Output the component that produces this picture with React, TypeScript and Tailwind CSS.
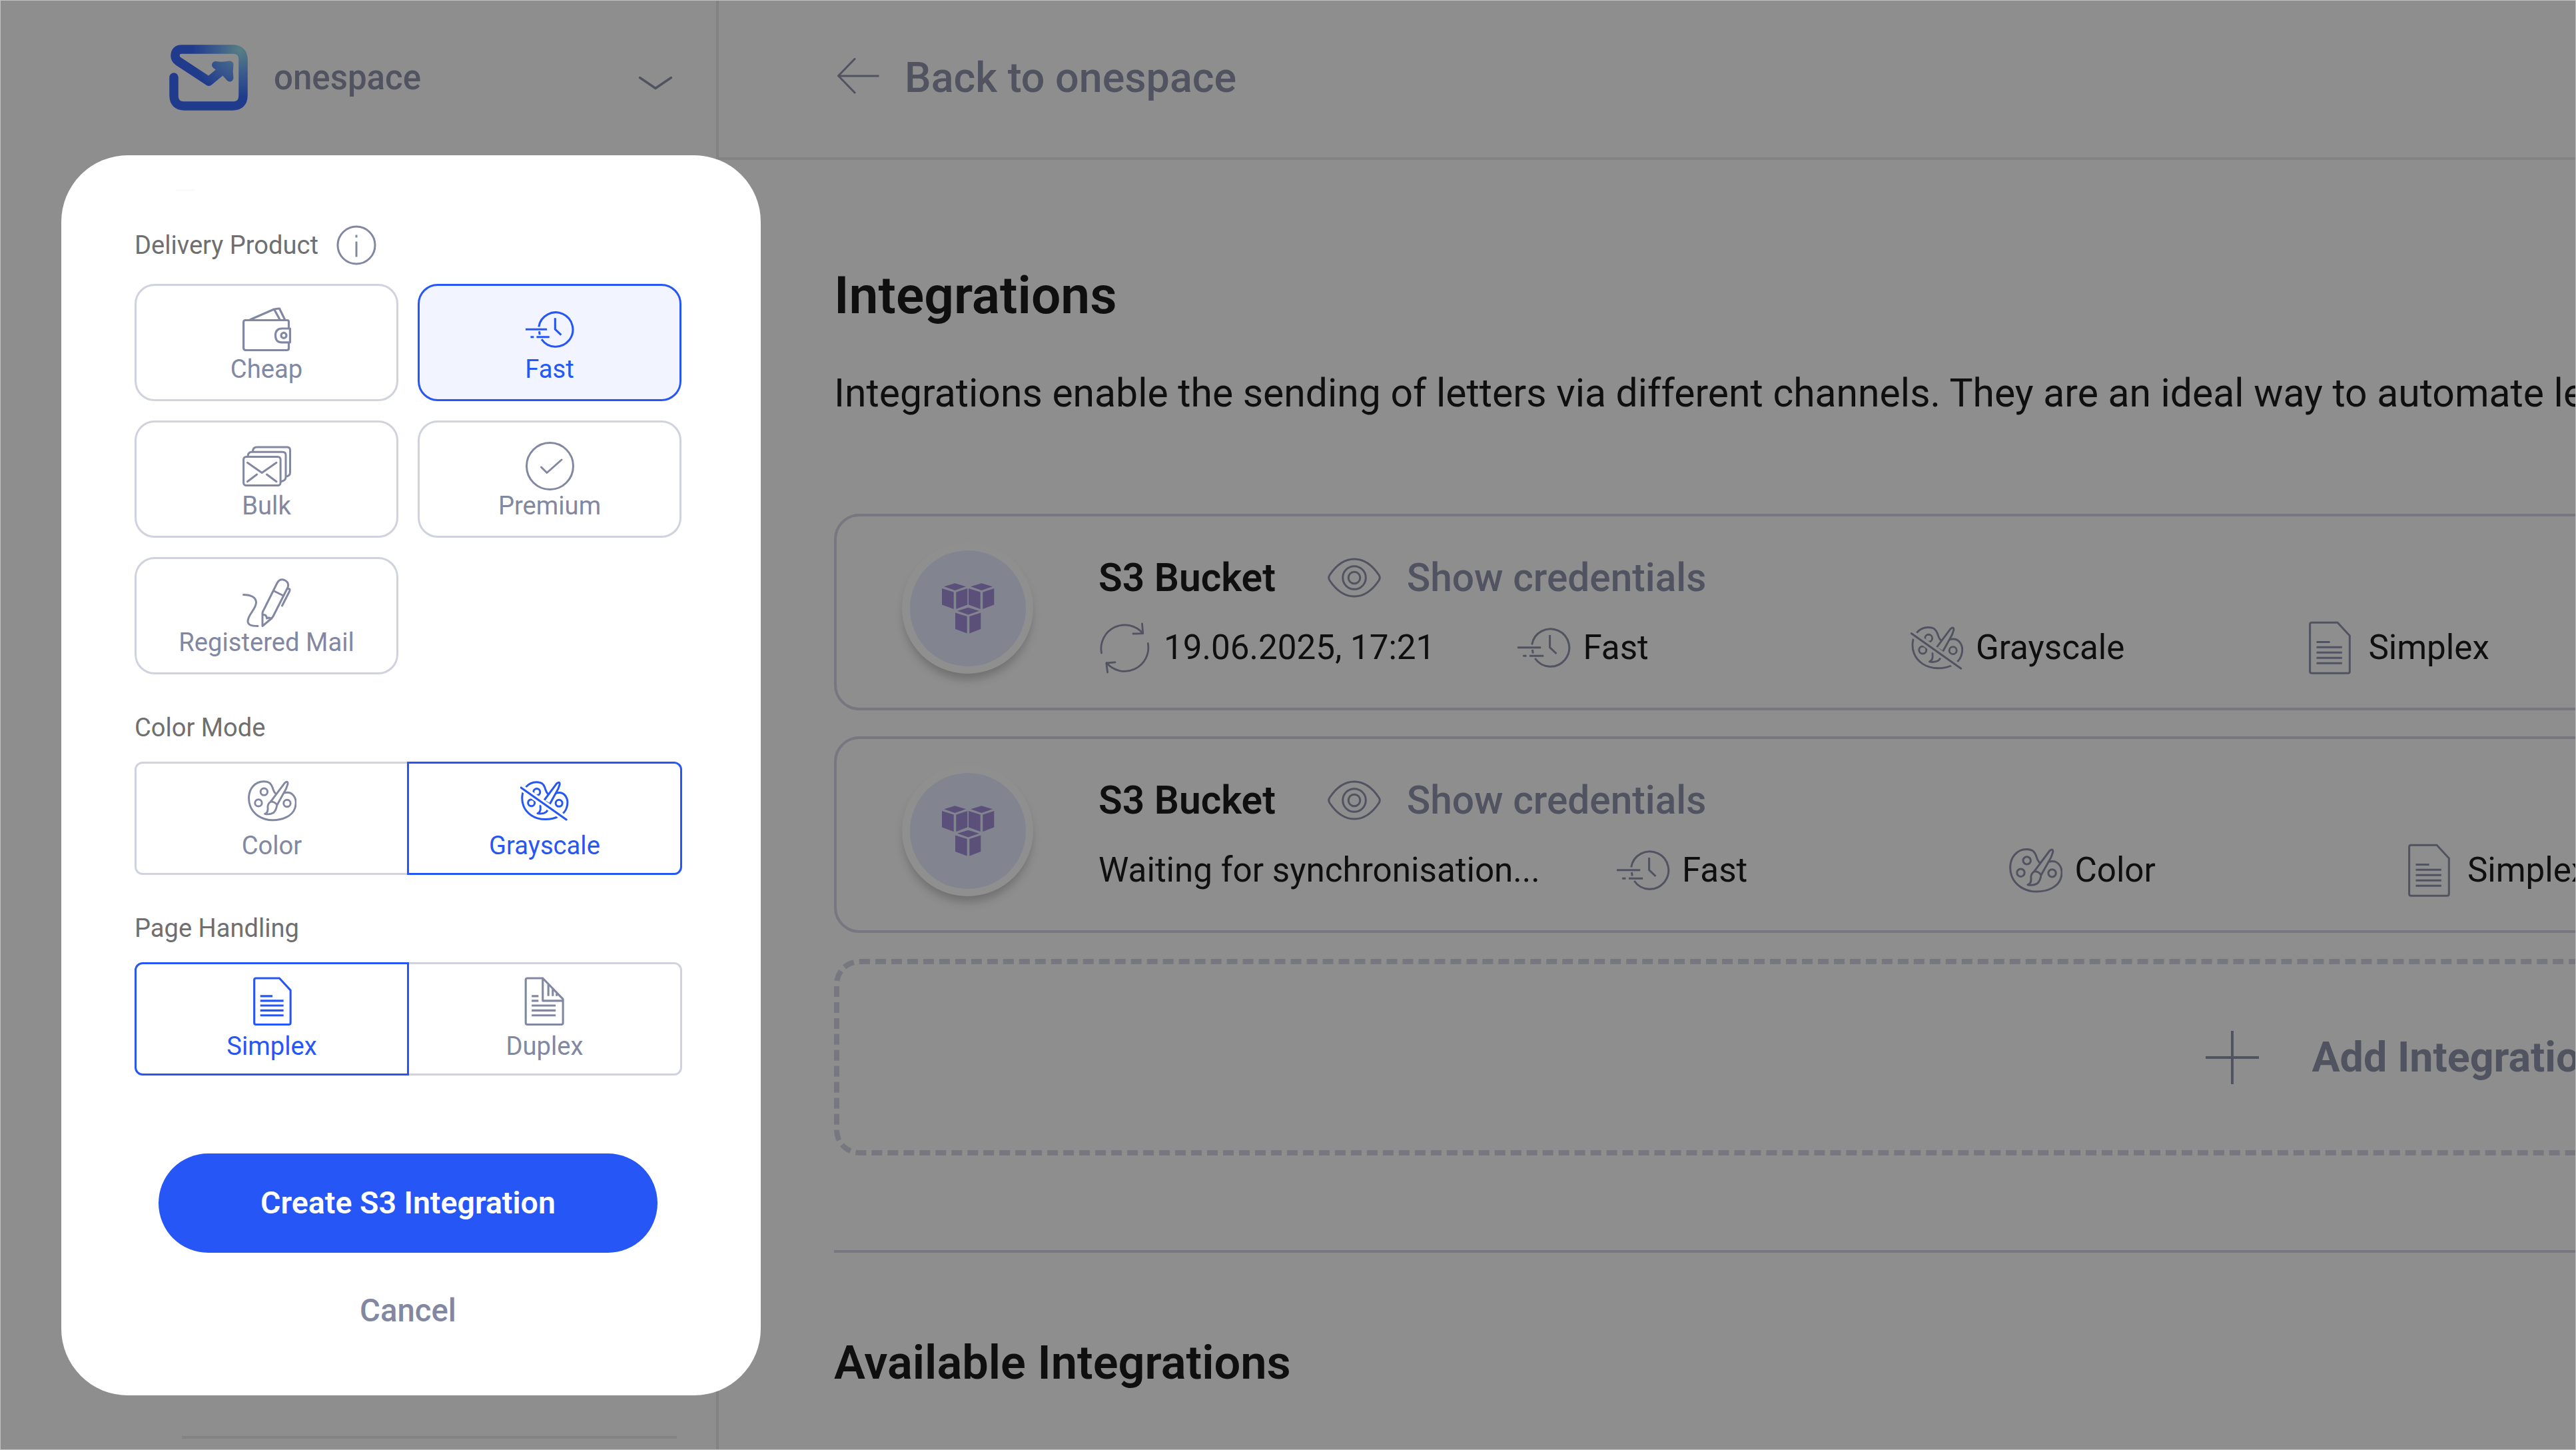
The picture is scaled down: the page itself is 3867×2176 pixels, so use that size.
import React, { useId } from "react";

type IconProps = { className?: string; stroke?: number };

const line = {
  fill: "none",
  stroke: "currentColor",
  strokeLinecap: "round" as const,
  strokeLinejoin: "round" as const,
};

function Logo() {
  return (
    <svg viewBox="0 0 118 99" className="h-[99px] w-[118px] shrink-0">
      <defs>
        <radialGradient id="logo-glow" gradientUnits="userSpaceOnUse" cx="106" cy="8" r="72">
          <stop offset="0" stopColor="#587f83" />
          <stop offset="0.45" stopColor="#3d5d8c" />
          <stop offset="1" stopColor="#203a8c" />
        </radialGradient>
      </defs>
      <g fill="none" stroke="url(#logo-glow)" strokeLinecap="round" strokeLinejoin="round">
        <path
          strokeWidth="13.5"
          d="M7 49V76Q7 92 23 92H95Q111 92 111 76V23Q111 7 95 7H19Q9 7 9 17Q9 21 13 24.500L59.500 55L80 38"
        />
        <path fill="url(#logo-glow)" strokeWidth="11" d="M69.500 30.500Q80 32 91 30Q89.500 40 91 50L81 39Z" />
      </g>
    </svg>
  );
}

function WalletIcon({ className, stroke = 3.2 }: IconProps) {
  return (
    <svg viewBox="0 0 73 73" className={className} {...line} strokeWidth={stroke}>
      <path d="M69.500 33V25Q69.500 22.500 67 22.500H4.500Q1.600 22.500 1.600 25.500V64Q1.600 67.500 5 67.500H66.500Q69.500 67.500 69.500 64.500V57" />
      <path d="M71.400 35H59.500Q49.500 35 49.500 45.500T59.500 55.800H71.400Z" />
      <circle cx="62" cy="45.400" r="4" />
      <path d="M12 21.500L47.500 6L56 21.500M50 5.500L55.500 5L63.500 21.500" />
    </svg>
  );
}

function ClockIcon({ className, stroke = 3 }: IconProps) {
  return (
    <svg viewBox="0 0 80 80" className={className} {...line} strokeLinecap="butt" strokeWidth={stroke}>
      <path d="M21.700 35.500A28.200 28.200 0 1 1 26.300 56M22.400 43L23.300 48.500" />
      <path d="M0 39.700H35.200M8.200 52.300H13.500M18 52.300H39.200" />
      <path d="M48.600 21V39.700L58.500 49" />
    </svg>
  );
}

function BulkIcon({ className, stroke = 3 }: IconProps) {
  return (
    <svg viewBox="0 0 73 73" className={className} {...line} strokeWidth={stroke}>
      <rect x="1.600" y="22.500" width="55.500" height="43" rx="4" />
      <path d="M8 21.500Q8.500 15.300 14 15.300H60Q65 15.300 65 20V53Q65 58 58.500 59.500" />
      <path d="M15.500 14Q16 8 21.500 8H67Q71.500 8 71.500 12.500V46Q71.500 51 66 52" />
      <path d="M7.400 31.300L29.200 46.500L51 31.300M7.400 59.700L21.600 49M36.500 49L51 59.700" />
    </svg>
  );
}

function CheckIcon({ className, stroke = 3 }: IconProps) {
  return (
    <svg viewBox="0 0 73 73" className={className} {...line} strokeWidth={stroke}>
      <circle cx="36.500" cy="36.500" r="35" />
      <path d="M23.500 38L32 46.500L54 27" />
    </svg>
  );
}

function PenIcon({ className, stroke = 3 }: IconProps) {
  return (
    <svg viewBox="0 0 73 73" className={className} {...line} strokeWidth={stroke}>
      <path d="M1.500 24.500C12 24.500 20.500 28 20.500 36C20.500 46 8.500 54 8 64C8 70 13 71.500 23 71.500" />
      <path d="M30 71.500V52Q30.500 49 32.500 46L52 7Q56 0 63 2.500Q70.500 6 68 13.500L46.500 56Q45 59 42.500 61Z" />
      <path d="M46.500 18.500L61.500 26M31 54.500Q36 54 36.500 60Q40 58 43.500 60.500" />
      <path d="M67.500 15.500Q72.500 15 70.500 19.500L59.500 41" />
    </svg>
  );
}

const paletteShapes = (
  <>
    <path d="M60 27.200C67 25.500 72 27.500 75.200 31.600C79.500 37 80 45 77.300 53C73 65 58 72 41 72C23 72 9 62 4 49C0 38 1 25 8.500 16.500C13.500 10.800 20 8.500 26 8.500C36 8.500 38.500 13 40.500 18C42 23 43 27 46.500 29" />
    <circle cx="26.700" cy="25.400" r="5.700" />
    <circle cx="17.500" cy="43.700" r="5.700" />
    <circle cx="64.600" cy="44.400" r="5.700" />
    <path d="M37.600 41.800L60.600 11Q66 6.500 65.800 12.500Q64 20 58.800 28L48.300 46.800" />
    <path d="M37.600 41.800Q33 45 32.800 50Q34 60 28 61.800Q36 63.500 42 60Q47 56 48 46.800Q44 41.500 37.600 41.800Z" />
  </>
);

function PaletteIcon({ className, stroke = 3 }: IconProps) {
  return (
    <svg viewBox="0 0 80 80" className={className} {...line} strokeWidth={stroke}>
      {paletteShapes}
    </svg>
  );
}

function GrayscaleIcon({ className, stroke = 3 }: IconProps) {
  const id = useId();
  return (
    <svg viewBox="0 0 80 80" className={className} {...line} strokeWidth={stroke}>
      <mask id={id} maskUnits="userSpaceOnUse" x="0" y="0" width="80" height="80">
        <rect width="80" height="80" fill="white" stroke="none" />
        <path d="M-4 14.500L84 77" stroke="black" strokeWidth="10.500" />
      </mask>
      <g mask={`url(#${id})`}>
        <g transform="translate(1.400 1.300) scale(0.965)">{paletteShapes}</g>
      </g>
      <path d="M1.200 18.600L75.800 71.200" />
    </svg>
  );
}

function SimplexIcon({ className, stroke = 3 }: IconProps) {
  return (
    <svg viewBox="0 0 80 80" className={className} {...line} strokeWidth={stroke}>
      <path d="M13.500 2.200H52L70.300 22V75.500Q70.300 78.300 67.500 78.300H13.500Q10.600 78.300 10.600 75.500V5Q10.600 2.200 13.500 2.200Z" />
      <path strokeLinecap="butt" d="M20.500 31.600H40.600M20.500 39.300H58.800M20.500 47.200H58.800M20.500 55.200H58.800M20.500 63.300H58.800" />
    </svg>
  );
}

function DuplexIcon({ className, stroke = 3 }: IconProps) {
  return (
    <svg viewBox="0 0 80 80" className={className} {...line} strokeWidth={stroke}>
      <path d="M37 2.200H12Q9 2.200 9 5V75.500Q9 78.300 12 78.300H67.500Q70.300 78.300 70.300 75.500V36.500L37 2.200V39.300H70" />
      <path strokeLinecap="butt" d="M18.800 31.600H30M18.800 39.300H30M18.800 47.200H58.300M18.800 55.200H58.300M18.800 63.300H58.300M46.200 13V31.600M53.500 20V31.600M60 27V31.600" />
    </svg>
  );
}

function RefreshIcon({ className }: IconProps) {
  return (
    <svg viewBox="0 0 80 80" className={className} {...line} strokeWidth="2.800">
      <path d="M4.500 48A35.500 35.500 0 0 1 66.500 18.500M65.500 4L66.800 18.700L52 19" />
      <path d="M74.300 33.500A35.500 35.500 0 0 1 12 62.500M25 61.800L11.800 63L13.600 77" />
    </svg>
  );
}

function EyeIcon({ className }: IconProps) {
  return (
    <svg viewBox="0 0 80 60" className={className} {...line} strokeWidth="3">
      <path d="M3 26C13 11 26 2 40 2S67 11 77 26Q79.500 30 77 34C67 49 54 58 40 58S13 49 3 34Q0.500 30 3 26Z" />
      <circle cx="40" cy="30" r="17.300" />
      <circle cx="40" cy="30" r="8.800" />
    </svg>
  );
}

function Cube({ x, y }: { x: number; y: number }) {
  return (
    <g transform={`translate(${x} ${y})`}>
      <path d="M3.600 5.800L20 0.800L36.500 5.800L20 11.500Z" />
      <path d="M0.500 8.500L18.200 14V39.500L0.500 33Z" />
      <path d="M21.800 14L38.800 8.500V33L21.800 39.500Z" />
    </g>
  );
}

function BucketBadge() {
  return (
    <div className="mb-3 flex size-[197px] shrink-0 items-center justify-center rounded-full bg-[#8f8f8f] shadow-[0_11px_14px_-3px_rgba(0,0,0,0.22)]">
      <div className="flex size-[174px] items-center justify-center rounded-full bg-[#82858f]">
        <svg viewBox="0 0 80 77" className="h-[77px] w-[80px] fill-[#5b507a]">
          <Cube x={0.5} y={0.5} />
          <Cube x={40.5} y={0.5} />
          <Cube x={20.5} y={37} />
        </svg>
      </div>
    </div>
  );
}

function Meta({ icon, label }: { icon: React.ReactNode; label: string }) {
  return (
    <div className="flex w-[589.500px] shrink-0 items-center gap-[18px]">
      <span className="text-[#525361]">{icon}</span>
      <span className="pt-0.5">{label}</span>
    </div>
  );
}

function IntegrationCard({ children }: { children: React.ReactNode }) {
  return (
    <div className="flex h-[295px] w-[4715px] items-center gap-[98px] rounded-[38px] border-4 border-[#777780] pl-[98px]">
      <BucketBadge />
      <div className="flex flex-col gap-[25px] pt-px">
        <div className="flex h-[80px] items-center text-[58.600px]">
          <span className="pt-0.5 font-semibold">S3 Bucket</span>
          <div className="ml-[78px] flex items-center gap-[39px] font-medium text-[#525361]">
            <EyeIcon className="h-[60px] w-[80px]" />
            <span className="pt-0.5">Show credentials</span>
          </div>
        </div>
        <div className="flex h-[80px] items-center text-[51.200px]">{children}</div>
      </div>
    </div>
  );
}

function ProductOption({ icon, label, active }: { icon: React.ReactNode; label: string; active?: boolean }) {
  return (
    <button
      className={
        "flex h-[176px] flex-col items-center rounded-[30px] border-[3px] pt-[29px] text-[38.200px] leading-[46px] " +
        (active ? "border-[#2657f6] bg-[#f2f5ff] text-[#2657f6]" : "border-[#d0d3de] bg-white text-[#8288a1]")
      }
    >
      {icon}
      {label}
    </button>
  );
}

function Segment({ icon, label, active, side }: { icon: React.ReactNode; label: string; active?: boolean; side: "left" | "right" }) {
  return (
    <button
      className={
        "relative flex h-[170px] flex-col items-center border-[3px] pt-[19px] text-[38.200px] leading-[46px] " +
        (side === "left" ? "w-[412px] rounded-l-[12px] " : "-ml-[3px] w-[413px] rounded-r-[12px] ") +
        (active ? "z-10 border-[#2657f6] text-[#2657f6]" : "border-[#d0d3de] text-[#8288a1]")
      }
    >
      {icon}
      <span className="mt-2">{label}</span>
    </button>
  );
}

function IntegrationDialog() {
  const icon = "size-[73px] shrink-0";
  return (
    <div className="absolute left-[92px] top-[233px] z-20 flex h-[1861px] w-[1050px] flex-col rounded-[100px] bg-white pl-[110px] pt-[51px]">
      <div className="ml-[61px] h-[3px] w-[29px] rounded-b-full bg-[#fafafa]" />
      <div className="mt-[51px] flex h-[60px] items-center text-[38.100px] text-[#6f6f6f]">
        <span className="pt-0.5">Delivery Product</span>
        <svg viewBox="0 0 60 60" className="ml-[27px] size-[60px] text-[#8288a1]" {...line} strokeWidth="3">
          <circle cx="30" cy="30" r="28" />
          <path strokeLinecap="butt" d="M30 24.500V47.500M30 14.500V18.500" />
        </svg>
      </div>
      <div className="mt-7 grid w-[821px] grid-cols-2 gap-[29px]">
        <ProductOption icon={<WalletIcon className={icon} />} label="Cheap" />
        <ProductOption icon={<ClockIcon className={icon} stroke={3.4} />} label="Fast" active />
        <ProductOption icon={<BulkIcon className={icon} />} label="Bulk" />
        <ProductOption icon={<CheckIcon className={icon} />} label="Premium" />
        <ProductOption icon={<PenIcon className={icon} />} label="Registered Mail" />
      </div>
      <div className="mt-[57px] text-[38.100px] leading-[46px] text-[#6f6f6f]">Color Mode</div>
      <div className="mt-7 flex">
        <Segment side="left" icon={<PaletteIcon className={icon} stroke={3.2} />} label="Color" />
        <Segment side="right" icon={<GrayscaleIcon className={icon} stroke={3.4} />} label="Grayscale" active />
      </div>
      <div className="mt-[57px] text-[38.100px] leading-[46px] text-[#6f6f6f]">Page Handling</div>
      <div className="mt-7 flex">
        <Segment side="left" icon={<SimplexIcon className={icon} stroke={3.4} />} label="Simplex" active />
        <Segment side="right" icon={<DuplexIcon className={icon} stroke={3.4} />} label="Duplex" />
      </div>
      <div className="mt-[117px] flex w-[821px] flex-col items-center">
        <button className="h-[149px] w-[749px] rounded-full bg-[#2657f6] text-[46.500px] font-semibold text-white">
          Create S3 Integration
        </button>
        <button className="mt-[57px] h-[60px] text-[47.300px] font-medium leading-[60px] text-[#8288a1]">Cancel</button>
      </div>
    </div>
  );
}

export default function App() {
  const metaIcon = "size-[80px] shrink-0";
  return (
    <div className="relative flex h-[2176px] w-[3867px] overflow-hidden bg-[#8e8e8e] font-['Roboto',sans-serif] text-[#0f0f0f]">
      <aside className="flex w-[1079px] shrink-0 flex-col border-r-4 border-[#838383]">
        <div className="flex h-[236px] items-center pb-[3px] pl-[254px] pr-[65px] text-[#525361]">
          <Logo />
          <span className="ml-[39px] pt-0.5 text-[51px] font-medium">onespace</span>
          <svg viewBox="0 0 52 24" className="ml-auto mt-[16px] h-[24px] w-[52px]" {...line} strokeWidth="3.500">
            <path d="M2.500 3.500L26 19.500L49.500 3.500" />
          </svg>
        </div>
        <div className="mb-[17px] ml-[273px] mt-auto h-1 w-[743px] bg-[#838383]" />
      </aside>

      <main className="flex min-w-0 flex-1 flex-col">
        <header className="flex h-[240px] items-center gap-[38px] border-b-4 border-[#838383] pb-[3px] pl-[177px] text-[62.800px] font-medium text-[#525361]">
          <svg viewBox="0 0 64 60" className="h-[60px] w-[64px]" {...line} strokeWidth="3" strokeLinecap="butt">
            <path d="M63.500 27H2.500M28 0.500L2.500 26.700L28 53" />
          </svg>
          <span className="pt-0.5">Back to onespace</span>
        </header>

        <div className="flex flex-col whitespace-nowrap pl-[173px]">
          <h1 className="mt-[157px] text-[78.600px] font-semibold leading-[92px]">Integrations</h1>
          <p className="mt-[66px] text-[58.850px] leading-[70px]">
            Integrations enable the sending of letters via different channels. They are an ideal way to automate letter
            dispatch.
          </p>

          <div className="mt-[146px] flex flex-col gap-[39px]">
            <IntegrationCard>
              <RefreshIcon className="size-[80px] shrink-0 text-[#525361]" />
              <span className="ml-[18px] mr-[124px] pt-0.5">19.06.2025, 17:21</span>
              <Meta icon={<ClockIcon className={metaIcon} />} label="Fast" />
              <Meta icon={<GrayscaleIcon className={metaIcon} />} label="Grayscale" />
              <Meta icon={<SimplexIcon className={metaIcon} />} label="Simplex" />
            </IntegrationCard>
            <IntegrationCard>
              <span className="mr-[115px] pt-0.5">Waiting for synchronisation...</span>
              <Meta icon={<ClockIcon className={metaIcon} />} label="Fast" />
              <Meta icon={<PaletteIcon className={metaIcon} />} label="Color" />
              <Meta icon={<SimplexIcon className={metaIcon} />} label="Simplex" />
            </IntegrationCard>
            <div className="flex h-[295px] w-[4715px] items-center justify-center gap-[79px] rounded-[38px] border-8 border-dashed border-[#777780] text-[62.800px] font-bold text-[#525361]">
              <svg viewBox="0 0 80 80" className="size-[80px]" {...line} strokeWidth="4" strokeLinecap="butt">
                <path d="M40 0V80M0 40H80" />
              </svg>
              <span className="pt-0.5">Add Integration</span>
            </div>
          </div>

          <div className="mt-[142px] h-1 w-[4715px] bg-[#777780]" />
          <h2 className="mt-[123px] text-[70.400px] font-semibold leading-[84px]">Available Integrations</h2>
        </div>
      </main>

      <IntegrationDialog />
      <div className="pointer-events-none absolute inset-0 border border-[#c0c1c0]" />
    </div>
  );
}
